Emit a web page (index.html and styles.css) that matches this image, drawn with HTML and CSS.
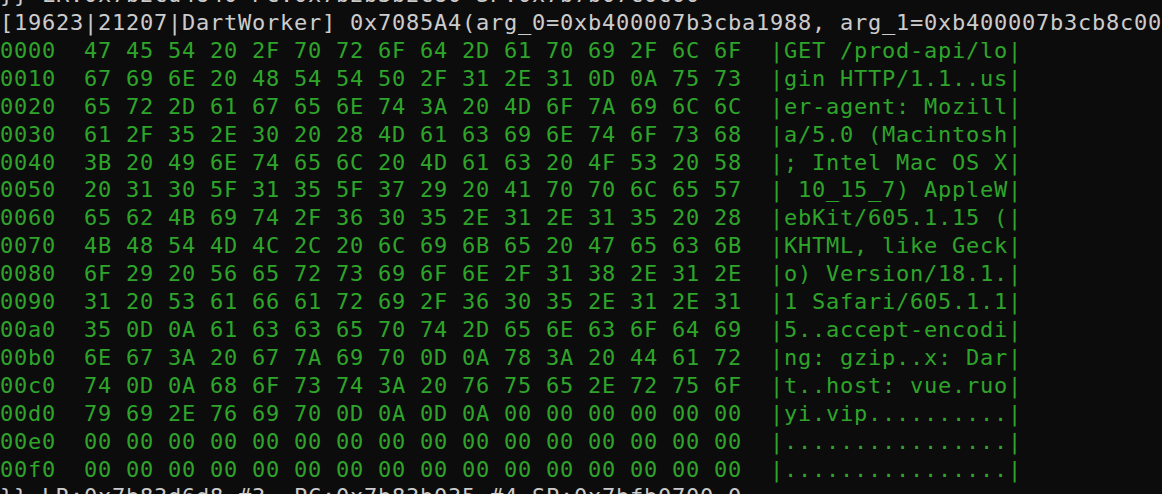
FILE: index.html
```html
<!DOCTYPE html>
<html>
<head>
<meta charset="utf-8">
<link rel="stylesheet" href="styles.css">
</head>
<body>
<div class="term">
<div class="line w">}} LR:0x7b2cd4840 PC:0x7b2b3b2c80 SP:0x7b7b07c0c00</div>
<div class="line w">[19623|21207|DartWorker] 0x7085A4(arg_0=0xb400007b3cba1988, arg_1=0xb400007b3cb8c00</div>
<div class="line g">0000  47 45 54 20 2F 70 72 6F 64 2D 61 70 69 2F 6C 6F  |GET /prod-api/lo|</div>
<div class="line g">0010  67 69 6E 20 48 54 54 50 2F 31 2E 31 0D 0A 75 73  |gin HTTP/1.1..us|</div>
<div class="line g">0020  65 72 2D 61 67 65 6E 74 3A 20 4D 6F 7A 69 6C 6C  |er-agent: Mozill|</div>
<div class="line g">0030  61 2F 35 2E 30 20 28 4D 61 63 69 6E 74 6F 73 68  |a/5.0 (Macintosh|</div>
<div class="line g">0040  3B 20 49 6E 74 65 6C 20 4D 61 63 20 4F 53 20 58  |; Intel Mac OS X|</div>
<div class="line g">0050  20 31 30 5F 31 35 5F 37 29 20 41 70 70 6C 65 57  | 10_15_7) AppleW|</div>
<div class="line g">0060  65 62 4B 69 74 2F 36 30 35 2E 31 2E 31 35 20 28  |ebKit/605.1.15 (|</div>
<div class="line g">0070  4B 48 54 4D 4C 2C 20 6C 69 6B 65 20 47 65 63 6B  |KHTML, like Geck|</div>
<div class="line g">0080  6F 29 20 56 65 72 73 69 6F 6E 2F 31 38 2E 31 2E  |o) Version/18.1.|</div>
<div class="line g">0090  31 20 53 61 66 61 72 69 2F 36 30 35 2E 31 2E 31  |1 Safari/605.1.1|</div>
<div class="line g">00a0  35 0D 0A 61 63 63 65 70 74 2D 65 6E 63 6F 64 69  |5..accept-encodi|</div>
<div class="line g">00b0  6E 67 3A 20 67 7A 69 70 0D 0A 78 3A 20 44 61 72  |ng: gzip..x: Dar|</div>
<div class="line g">00c0  74 0D 0A 68 6F 73 74 3A 20 76 75 65 2E 72 75 6F  |t..host: vue.ruo|</div>
<div class="line g">00d0  79 69 2E 76 69 70 0D 0A 0D 0A 00 00 00 00 00 00  |yi.vip..........|</div>
<div class="line g">00e0  00 00 00 00 00 00 00 00 00 00 00 00 00 00 00 00  |................|</div>
<div class="line g">00f0  00 00 00 00 00 00 00 00 00 00 00 00 00 00 00 00  |................|</div>
<div class="line w">}} LR:0x7b83d6d8 #3  PC:0x7b83b035 #4 SP:0x7bfb0700 0</div>
</div>
</body>
</html>
```

FILE: styles.css
```css
html, body {
  margin: 0;
  padding: 0;
  background: #0c0c0c;
  overflow: hidden;
}
body {
  width: 1162px;
  height: 494px;
}
.term {
  margin-top: -18.9px;
  padding-left: 0;
  font-family: "DejaVu Sans Mono", "Liberation Mono", monospace;
  font-size: 22px;
  letter-spacing: 0.755px;
  line-height: 27.9px;
}
.line {
  white-space: pre;
  overflow: hidden;
}
.w {
  color: #cccccc;
}
.g {
  color: #2ea52a;
}
```
